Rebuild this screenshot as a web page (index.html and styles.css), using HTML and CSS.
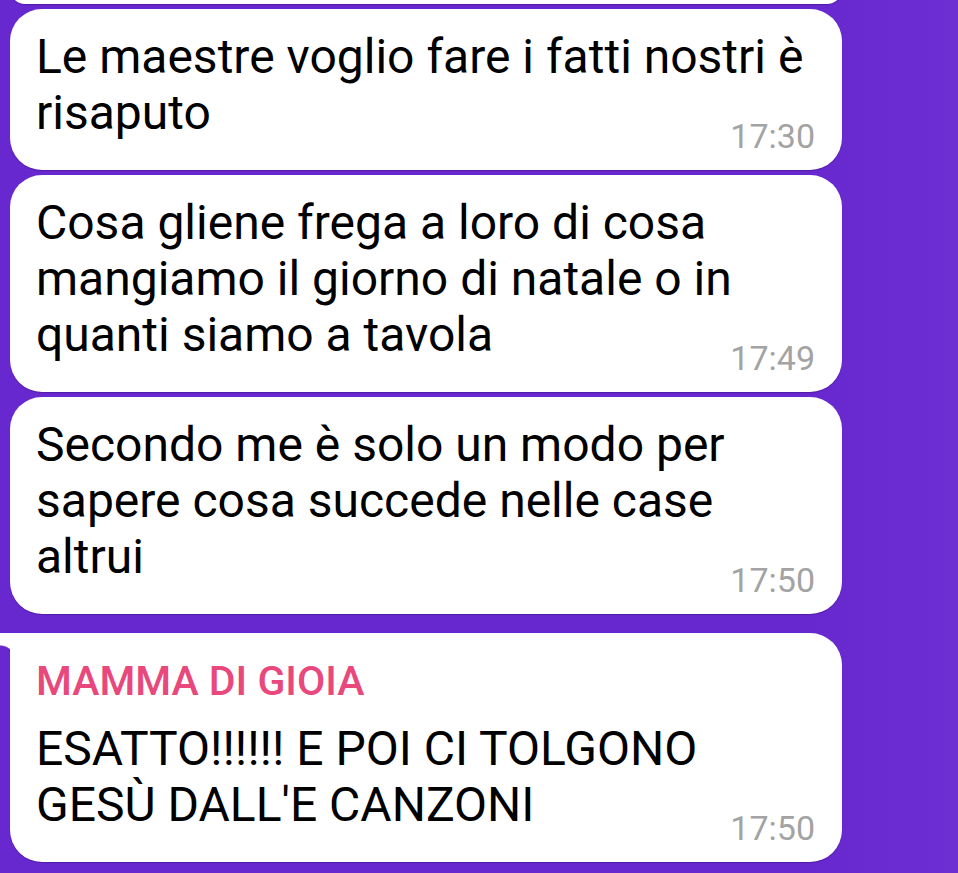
FILE: index.html
```html
<!DOCTYPE html>
<html lang="it">
<head>
<meta charset="utf-8">
<title>Chat</title>
<link rel="stylesheet" href="styles.css">
</head>
<body>
<div class="chat">
  <div class="bubble prev"></div>
  <div class="bubble">
    <p class="text">Le maestre voglio fare i fatti nostri è risaputo</p>
    <div class="time">17:30</div>
  </div>
  <div class="bubble">
    <p class="text">Cosa gliene frega a loro di cosa mangiamo il giorno di natale o in quanti siamo a tavola</p>
    <div class="time">17:49</div>
  </div>
  <div class="bubble">
    <p class="text">Secondo me è solo un modo per sapere cosa succede nelle case altrui</p>
    <div class="time">17:50</div>
  </div>
  <div class="bubble first">
    <div class="sender">MAMMA DI GIOIA</div>
    <p class="text">ESATTO!!!!!! E POI CI TOLGONO<br>GESÙ DALL'E CANZONI</p>
    <div class="time">17:50</div>
  </div>
</div>
</body>
</html>
```
FILE: styles.css
```css
html, body {
  margin: 0;
  padding: 0;
}
body {
  background: linear-gradient(90deg, #6828cf 0%, #6828cf 85%, #6c2fd2 100%);
  width: 958px;
  height: 873px;
  overflow: hidden;
  font-family: Roboto, "Noto Sans", sans-serif;
}
.chat {
  display: flex;
  flex-direction: column;
  gap: 5px;
  padding-left: 10px;
  width: 832px;
}
.bubble {
  position: relative;
  background: #fff;
  border-radius: 32px;
  padding: 20px 27px 17px 26px;
  box-shadow: 0 1px 1px rgba(40, 0, 90, 0.35);
}
.bubble.prev {
  height: 30px;
  margin-top: -26px;
  padding: 0;
}
.bubble.first {
  margin-top: 14px;
  border-top-left-radius: 0;
}
.bubble.first::before {
  content: "";
  position: absolute;
  left: -10px;
  top: 0;
  width: 10px;
  height: 28px;
  background: radial-gradient(circle at 0 100%, transparent 15px, #fff 16px);
}
.text {
  margin: 0;
  font-size: 48px;
  line-height: 56px;
  color: #000;
}
.sender {
  font-size: 41px;
  font-weight: 500;
  line-height: 56px;
  color: #e8487b;
  margin-bottom: 12px;
}
.time {
  text-align: right;
  font-size: 34px;
  line-height: 34px;
  color: #a3a3a3;
  margin-top: -22px;
}
```
